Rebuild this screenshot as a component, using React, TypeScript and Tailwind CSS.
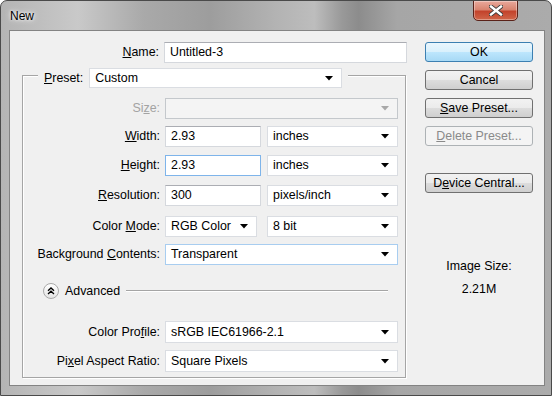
import React from 'react';

const font = "font-['Liberation_Sans',Arial,sans-serif] text-[12.4px]";

function Arrow({ disabled = false }: { disabled?: boolean }) {
  return (
    <svg width="8" height="5" viewBox="0 0 8 5" className="shrink-0">
      <path d="M0 0h8L4 4.5z" fill={disabled ? '#a8a8a8' : '#000'} />
    </svg>
  );
}

function Input({ value, w, focused = false }: { value: string; w: string; focused?: boolean }) {
  return (
    <div
      className={`${w} h-[21px] bg-white border flex items-center pl-[5px] text-black ${
        focused ? 'border-[#7eb4ea]' : 'border-[#d5d8dd] border-t-[#abadb3]'
      }`}
    >
      {value}
    </div>
  );
}

function Select({ value, w, h = 'h-[21px]', focused = false }: { value: string; w: string; h?: string; focused?: boolean }) {
  return (
    <div
      className={`${w} ${h} bg-white border flex items-center justify-between pl-[5px] pr-[8px] text-black ${
        focused ? 'border-[#a8cdf0]' : 'border-[#dadde2]'
      }`}
    >
      <span>{value}</span>
      <Arrow />
    </div>
  );
}

function Label({ children, gray = false }: { children: React.ReactNode; gray?: boolean }) {
  return <div className={`w-[137px] text-right mr-[5px] whitespace-nowrap ${gray ? 'text-[#a3a3a3]' : 'text-black'}`}>{children}</div>;
}

function Btn({ children, kind = 'normal', mt = '' }: { children: React.ReactNode; kind?: 'default' | 'normal' | 'disabled'; mt?: string }) {
  const styles = {
    default: 'border-[#3c7fb1] bg-[linear-gradient(#eaf6fd_0%,#d9f0fc_50%,#bee6fd_50%,#a7d9f5_100%)] text-black',
    normal: 'border-[#707070] bg-[linear-gradient(#f2f2f2_0%,#ebebeb_50%,#dddddd_50%,#cfcfcf_100%)] text-black',
    disabled: 'border-[#adb2b5] bg-[#f4f4f4] text-[#8a8a8a]',
  }[kind];
  return (
    <div className={`${mt} w-[108px] h-[20px] rounded-[3px] border flex items-center justify-center ${styles}`}>
      {children}
    </div>
  );
}

export default function App() {
  return (
    <div className={`${font} relative w-[552px] h-[396px] overflow-hidden rounded-t-[7px] border border-[#4a4a4a] bg-[linear-gradient(90deg,#b4b4b4_0%,#c9c9c9_14%,#a9a9a9_26%,#9d9d9d_38%,#b3b3b3_50%,#bdbdbd_57%,#999_62%,#8c8c8c_65%,#a6a6a6_72%,#ababab_100%)]`}>
      {/* Title bar */}
      <div className="h-[29px] flex items-center pl-[9px] text-[12px] text-black [text-shadow:0_0_6px_#fff,0_0_3px_#fff]">
        New
      </div>
      <div className="absolute top-[-1px] left-[472px] w-[45px] h-[21px] rounded-b-[5px] border border-[#5a2219] bg-[linear-gradient(#e9a99c_0%,#d98470_45%,#c3432c_55%,#d0664a_100%)] shadow-[inset_0_0_0_1px_rgba(255,255,255,0.35)] flex items-center justify-center">
        <svg width="14" height="11" viewBox="0 0 14 11">
          <path d="M2 1.5l10 8M12 1.5l-10 8" stroke="#3b3b3b" strokeWidth="4.2" strokeLinecap="square" />
          <path d="M2 1.5l10 8M12 1.5l-10 8" stroke="#fff" strokeWidth="2.4" strokeLinecap="square" />
        </svg>
      </div>

      {/* Client area */}
      <div className="ml-[8px] w-[536px] h-[356px] bg-[#f0f0f0] border border-[#838383] flex pt-[11px] pl-[12px]">
        {/* Left column */}
        <div className="w-[386px] flex flex-col">
          <div className="h-[20px] flex items-center">
            <Label><span className="underline">N</span>ame:</Label>
            <Input value="Untitled-3" w="w-[243px]" />
          </div>

          <div className="mt-[13px] w-[384px] border border-[#a5a5a5] shadow-[inset_1px_1px_0_#fff,1px_1px_0_#fff] flex flex-col pb-[5px]">
            <div className="-mt-[8px] ml-[15px] self-start flex items-center bg-[#f0f0f0] px-[6px]">
              <div className="text-black mr-[6px]"><span className="underline">P</span>reset:</div>
              <Select value="Custom" w="w-[253px]" h="h-[20px]" />
            </div>

            <div className="mt-[10px] flex items-center">
              <Label gray>Si<span className="underline">z</span>e:</Label>
              <div className="w-[233px] h-[21px] bg-[#f4f4f4] border border-[#c4c8cc] flex items-center justify-end pr-[8px]">
                <Arrow disabled />
              </div>
            </div>

            <div className="mt-[7px] flex items-center">
              <Label><span className="underline">W</span>idth:</Label>
              <Input value="2.93" w="w-[96px]" />
              <div className="ml-[6px]"><Select value="inches" w="w-[131px]" /></div>
            </div>

            <div className="mt-[8px] flex items-center">
              <Label><span className="underline">H</span>eight:</Label>
              <Input value="2.93" w="w-[96px]" focused />
              <div className="ml-[6px]"><Select value="inches" w="w-[131px]" /></div>
            </div>

            <div className="mt-[9px] flex items-center">
              <Label><span className="underline">R</span>esolution:</Label>
              <Input value="300" w="w-[96px]" />
              <div className="ml-[6px]"><Select value="pixels/inch" w="w-[131px]" /></div>
            </div>

            <div className="mt-[10px] flex items-center">
              <Label>Color <span className="underline">M</span>ode:</Label>
              <Select value="RGB Color" w="w-[92px]" />
              <div className="ml-[10px]"><Select value="8 bit" w="w-[131px]" /></div>
            </div>

            <div className="mt-[7px] flex items-center">
              <Label>Background <span className="underline">C</span>ontents:</Label>
              <Select value="Transparent" w="w-[233px]" focused />
            </div>

            <div className="mt-[18px] h-[16px] flex items-center pl-[20px] pr-[17px]">
              <div className="w-[16px] h-[16px] rounded-full border border-[#a9a9a9] bg-[linear-gradient(#ffffff,#e4e4e4)] flex items-center justify-center">
                <svg width="8" height="8" viewBox="0 0 8 8">
                  <path d="M1 3.8L4 1l3 2.8M1 7L4 4.2 7 7" fill="none" stroke="#000" strokeWidth="1.3" />
                </svg>
              </div>
              <div className="ml-[6px] text-black">Advanced</div>
              <div className="ml-[6px] flex-1 h-[2px] border-t border-[#a5a5a5] border-b border-b-white" />
            </div>

            <div className="mt-[22px] flex items-center">
              <Label>Color Pro<span className="underline">f</span>ile:</Label>
              <Select value="sRGB IEC61966-2.1" w="w-[233px]" h="h-[22px]" />
            </div>

            <div className="mt-[7px] flex items-center">
              <Label>Pi<span className="underline">x</span>el Aspect Ratio:</Label>
              <Select value="Square Pixels" w="w-[233px]" h="h-[22px]" />
            </div>
          </div>
        </div>

        {/* Right column */}
        <div className="ml-[17px] w-[108px] flex flex-col items-center">
          <Btn kind="default">OK</Btn>
          <Btn mt="mt-[8px]">Cancel</Btn>
          <Btn mt="mt-[8px]"><span><span className="underline">S</span>ave Preset...</span></Btn>
          <Btn kind="disabled" mt="mt-[8px]"><span><span className="underline">D</span>elete Preset...</span></Btn>
          <Btn mt="mt-[27px]"><span>D<span className="underline">e</span>vice Central...</span></Btn>
          <div className="mt-[66px] h-[14px] leading-[14px] text-black">Image Size:</div>
          <div className="mt-[9px] h-[14px] leading-[14px] text-black">2.21M</div>
        </div>
      </div>
    </div>
  );
}
